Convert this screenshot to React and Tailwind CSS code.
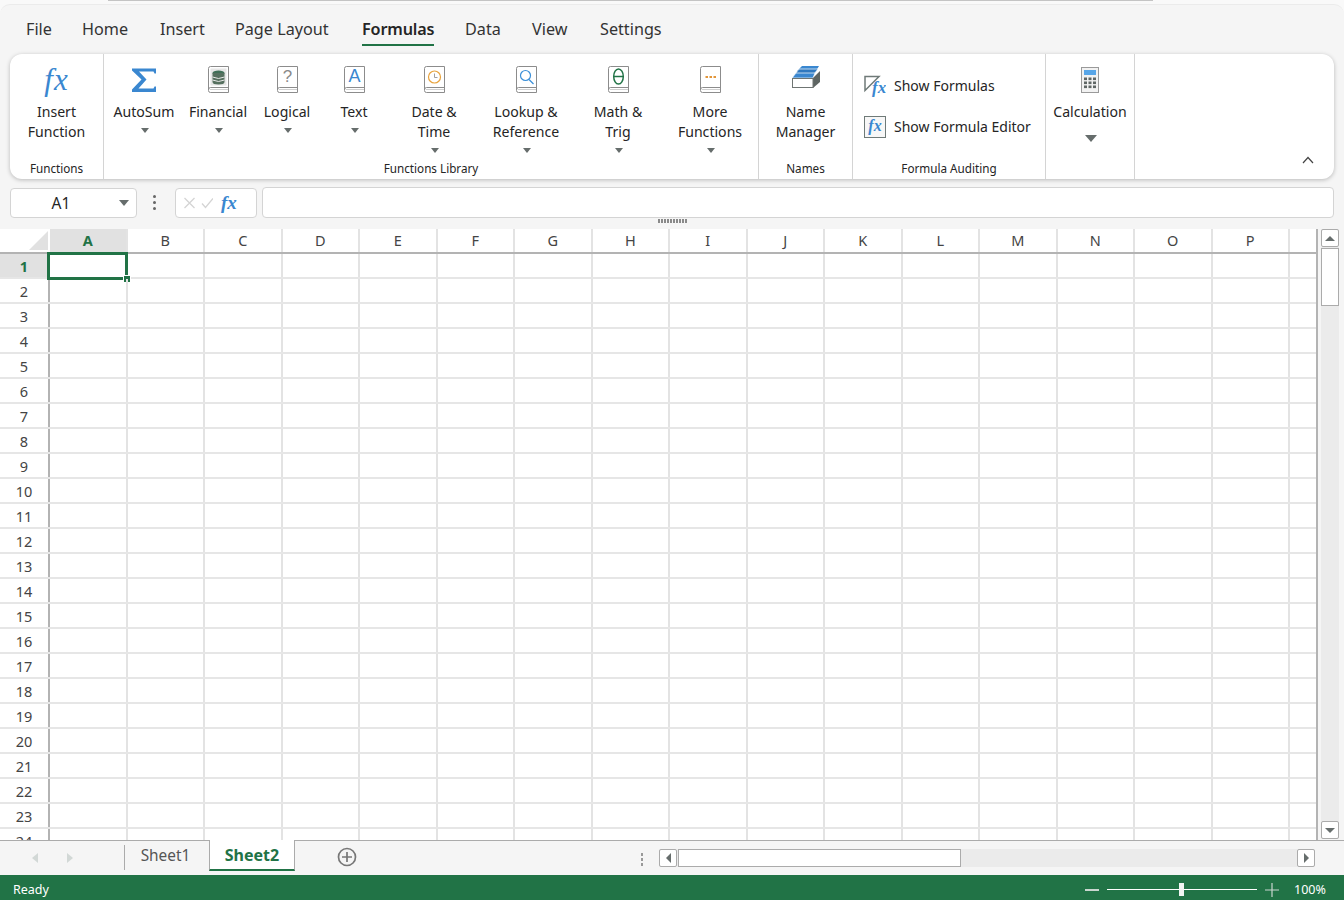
const font = { fontFamily: '"Noto Sans", sans-serif' };

const menu = [
  ["File", "w-[56px]"],
  ["Home", "w-[78px]"],
  ["Insert", "w-[75px]"],
  ["Page Layout", "w-[127px]"],
  ["Formulas", "w-[103px]"],
  ["Data", "w-[67px]"],
  ["View", "w-[68px]"],
  ["Settings", "w-[70px]"],
];
const columns = "ABCDEFGHIJKLMNOP".split("");
const rows = Array.from({ length: 24 }, (_, i) => i + 1);

function Caret({ className = "" }) {
  return <span className={`block w-0 h-0 border-l-[4px] border-r-[4px] border-t-[5px] border-l-transparent border-r-transparent border-t-[#666d6c] ${className}`} />;
}

function Book({ children }) {
  return (
    <svg width="24" height="30" viewBox="0 0 24 30" className="block">
      <path d="M4.5 1.5H22.5V27.5H4.5Q2.5 27.5 2.5 25.5V3.5Q2.5 1.5 4.5 1.5Z" fill="#fff" stroke="#8c8c8c" />
      <path d="M4.5 22.5H22.5M4.5 22.5Q2.5 22.5 2.5 25" fill="none" stroke="#8c8c8c" />
      <path d="M4 24.5H22" stroke="#d0d0d0" />
      {children}
    </svg>
  );
}

const icons = {
  fx: <span className="block -mt-[3px] font-['Liberation_Serif'] italic font-medium text-[31px] leading-[36px] text-[#3a87d0] tracking-[1px]">fx</span>,
  sigma: (
    <svg width="26" height="26" viewBox="0 0 26 26" className="block mt-[2px]">
      <path d="M1 1.5H25V6.5H23.5L22.5 4.5H8L15.5 12.5L7.5 21.5H22.5L23.5 19.5H25V25H1V22.5L10.5 12.5L1 3.5Z" fill="#3a87d0" />
    </svg>
  ),
  financial: (
    <Book>
      <rect x="4.5" y="3.5" width="16" height="17" fill="#e6e6e6" />
      <ellipse cx="12.5" cy="8" rx="6" ry="2.6" fill="#3f6f57" />
      <path d="M6.5 8V17Q6.5 19.5 12.5 19.5T18.5 17V8" fill="#56705f" />
      <path d="M6.5 12Q12.5 15 18.5 12M6.5 15Q12.5 18 18.5 15" fill="none" stroke="#e6e6e6" />
    </Book>
  ),
  logical: (
    <Book>
      <text x="12.5" y="17" textAnchor="middle" fontSize="17" fontFamily="Liberation Sans" fill="#8a8a8a">?</text>
    </Book>
  ),
  text: (
    <Book>
      <text x="12.5" y="17" textAnchor="middle" fontSize="18" fontFamily="Liberation Sans" fill="#3a87d0">A</text>
    </Book>
  ),
  date: (
    <Book>
      <circle cx="12.5" cy="12" r="6" fill="none" stroke="#e8a33d" strokeWidth="1.2" />
      <path d="M12.5 8.5V12.5H15.5" fill="none" stroke="#a0a0a0" />
    </Book>
  ),
  lookup: (
    <Book>
      <circle cx="11.5" cy="10.5" r="5" fill="none" stroke="#3a8fd8" strokeWidth="1.2" />
      <path d="M15 14.5L19.5 19" stroke="#3a8fd8" strokeWidth="1.3" />
    </Book>
  ),
  math: (
    <Book>
      <ellipse cx="12.5" cy="11.5" rx="4.8" ry="7.5" fill="none" stroke="#217346" strokeWidth="1.5" />
      <path d="M8 11.5H17" stroke="#217346" strokeWidth="1.5" />
    </Book>
  ),
  more: (
    <Book>
      <path d="M7.5 11H10V13H7.5ZM11.5 11H14V13H11.5ZM15.5 11H18V13H15.5Z" fill="#e2963a" />
    </Book>
  ),
  name: (
    <svg width="30" height="24" viewBox="0 0 30 24" className="block">
      <path d="M6 6L11 1H28L25 6Z" fill="#3a87d0" />
      <path d="M4 9L8 4H27L23 9Z" fill="#2f78bf" stroke="#fff" strokeWidth="0.7" />
      <path d="M1 13L5 8H24L22 13Z" fill="#3a87d0" stroke="#fff" strokeWidth="0.7" />
      <path d="M22 13L29 6V17L22 23Z" fill="#5e6563" />
      <rect x="1.5" y="13.5" width="20.5" height="9" fill="#fff" stroke="#6f7573" />
    </svg>
  ),
  calc: (
    <svg width="20" height="28" viewBox="0 0 20 28" className="block">
      <rect x="1.5" y="1.5" width="17" height="25" fill="#f2f2f2" stroke="#9a9a9a" />
      <rect x="4" y="4" width="12" height="5" fill="#58a6e8" />
      {[11.5, 15.5, 19.5].map((y) => [4, 8.5, 13].map((x) => <rect key={`${x}-${y}`} x={x} y={y} width="3" height="2.6" fill="#5f6665" />))}
    </svg>
  ),
};

function RibbonButton({ icon, lines, width, caret = true }) {
  return (
    <div className={`flex flex-col items-center shrink-0 ${width}`}>
      <div className="h-[48px] pt-[11px] flex justify-center">{icons[icon]}</div>
      <div className="text-[14.1px] leading-[20px] text-[#252525] text-center whitespace-nowrap">
        {lines.map((l) => <div key={l}>{l}</div>)}
      </div>
      {caret && <Caret className="mt-[6px] ml-[2px]" />}
    </div>
  );
}

function Group({ label, width, children }) {
  return (
    <div className={`flex flex-col shrink-0 border-r border-[#d4d4d4] ${width}`}>
      <div className="flex-1 flex justify-start">{children}</div>
      <div className="h-[18px] text-[11.7px] leading-[14px] text-[#252525] text-center">{label}</div>
    </div>
  );
}

function SheetGrid() {
  return (
    <div className="w-[1318px] h-[611px] shrink-0 overflow-hidden bg-white border-r-2 border-[#b3b3b3]">
      <div className="flex h-[25px] border-b-2 border-[#b3b3b3]">
        <div className="w-[50px] shrink-0 flex items-end justify-end pr-[2px] pb-[2px]">
          <div className="w-0 h-0 border-l-[19px] border-b-[19px] border-l-transparent border-b-[#e1e1e1]" />
        </div>
        {columns.map((c, i) => (
          <div key={c} className={`w-[77.5px] shrink-0 border-r-2 border-[#e3e3e3] text-center text-[14.5px] leading-[23px] ${i === 0 ? "bg-[#e1e1e1] font-bold text-[#217346]" : "text-[#444]"}`}>{c}</div>
        ))}
      </div>
      {rows.map((r) => (
        <div key={r} className="flex h-[25px] border-b-2 border-[#e6e6e6]">
          <div className={`w-[50px] shrink-0 border-r-2 border-[#b3b3b3] text-center text-[14.5px] leading-[24px] ${r === 1 ? "bg-[#e1e1e1] font-bold text-[#217346]" : "text-[#444]"}`}>{r}</div>
          {columns.map((c, i) => (
            <div key={c} className="relative w-[77.5px] shrink-0 border-r-2 border-[#e3e3e3]">
              {r === 1 && i === 0 && (
                <div className="absolute left-[-3px] top-[-2px] w-[81px] h-[28px] border-[3px] border-[#217346]">
                  <div className="absolute right-[-6px] bottom-[-6px] w-[6px] h-[6px] bg-[#217346] border border-white box-content" />
                </div>
              )}
            </div>
          ))}
          <div className="flex-1" />
        </div>
      ))}
    </div>
  );
}

function ScrollButton({ dir, className = "" }) {
  const tri = {
    up: "border-l-[5px] border-r-[5px] border-b-[5px] border-l-transparent border-r-transparent border-b-[#666d6c]",
    down: "border-l-[5px] border-r-[5px] border-t-[5px] border-l-transparent border-r-transparent border-t-[#666d6c]",
    left: "border-t-[5px] border-b-[5px] border-r-[5px] border-t-transparent border-b-transparent border-r-[#666d6c]",
    right: "border-t-[5px] border-b-[5px] border-l-[5px] border-t-transparent border-b-transparent border-l-[#666d6c]",
  };
  return (
    <div className={`w-[18px] h-[18px] shrink-0 bg-white border border-[#ababab] rounded-[2px] flex items-center justify-center ${className}`}>
      <span className={`block w-0 h-0 ${tri[dir]}`} />
    </div>
  );
}

export default function App() {
  return (
    <div style={font} className="w-[1344px] h-[900px] overflow-hidden flex flex-col bg-[#f9f9f9] text-[#252525]">
      {/* window edge */}
      <div className="h-[4px] shrink-0 pl-[108px]">
        <div className="w-[1045px] h-[1px] bg-[#c4c4c4]" />
      </div>

      <div className="flex-1 flex flex-col bg-[#f5f5f5] rounded-t-[10px] border-t border-[#ebebeb]">
        {/* menu */}
        <div className="h-[49px] shrink-0 flex pl-[26px] pt-[13px] text-[16.2px] leading-[22px]">
          {menu.map(([m, w]) => (
            <div key={m} className={`shrink-0 ${w}`}>
              {m === "Formulas"
                ? <span className="block w-fit h-[28px] font-semibold tracking-[-0.15px] border-b-2 border-[#217346]">{m}</span>
                : <span className="text-[#333]">{m}</span>}
            </div>
          ))}
        </div>

        {/* ribbon */}
        <div className="mx-[10px] h-[125px] shrink-0 flex bg-white rounded-xl shadow-[0_1px_4px_rgba(0,0,0,0.25)]">
          <Group label="Functions" width="w-[94px]">
            <RibbonButton icon="fx" lines={["Insert", "Function"]} width="w-[93px]" caret={false} />
          </Group>
          <Group label="Functions Library" width="w-[655px]">
            <div className="w-[4px] shrink-0" />
            <RibbonButton icon="sigma" lines={["AutoSum"]} width="w-[72px]" />
            <RibbonButton icon="financial" lines={["Financial"]} width="w-[76px]" />
            <RibbonButton icon="logical" lines={["Logical"]} width="w-[62px]" />
            <RibbonButton icon="text" lines={["Text"]} width="w-[72px]" />
            <RibbonButton icon="date" lines={["Date &", "Time"]} width="w-[88px]" />
            <RibbonButton icon="lookup" lines={["Lookup &", "Reference"]} width="w-[96px]" />
            <RibbonButton icon="math" lines={["Math &", "Trig"]} width="w-[88px]" />
            <RibbonButton icon="more" lines={["More", "Functions"]} width="w-[96px]" />
          </Group>
          <Group label="Names" width="w-[94px]">
            <RibbonButton icon="name" lines={["Name", "Manager"]} width="w-[93px]" caret={false} />
          </Group>
          <Group label="Formula Auditing" width="w-[193px]">
            <div className="w-full pl-[11px] pt-[21px] flex flex-col gap-[19px] text-[14px] leading-[22px] whitespace-nowrap">
              <div className="flex items-center gap-[8px]">
                <svg width="22" height="22" viewBox="0 0 22 22" className="block shrink-0">
                  <path d="M1 1.5H15L1 15.5Z" fill="none" stroke="#6f7a78" strokeWidth="1.5" />
                  <text x="8" y="18" fontSize="17" fontStyle="italic" fontWeight="700" fontFamily="Liberation Serif" fill="#3a87d0">fx</text>
                </svg>
                <span>Show Formulas</span>
              </div>
              <div className="flex items-center gap-[8px]">
                <span className="block w-[22px] h-[22px] shrink-0 border-[1.5px] border-[#6f7a78] bg-[#f7f7f7] text-center font-['Liberation_Serif'] italic font-bold text-[16px] leading-[18px] text-[#3a87d0]">fx</span>
                <span>Show Formula Editor</span>
              </div>
            </div>
          </Group>
          <div className="w-[89px] shrink-0 border-r border-[#d4d4d4] flex flex-col items-center">
            <div className="h-[48px] pt-[12px]">{icons.calc}</div>
            <div className="text-[14.1px] leading-[20px] whitespace-nowrap">Calculation</div>
            <span className="mt-[13px] ml-[1px] block w-0 h-0 border-l-[6px] border-r-[6px] border-t-[7px] border-l-transparent border-r-transparent border-t-[#666d6c]" />
          </div>
          <div className="flex-1 flex items-end justify-end pr-[20px] pb-[15px]">
            <svg width="12" height="8" viewBox="0 0 12 8" className="block"><path d="M1 7L6 1.5L11 7" fill="none" stroke="#444" strokeWidth="1.2" /></svg>
          </div>
        </div>

        {/* formula bar */}
        <div className="mt-[8px] mx-[10px] h-[31px] shrink-0 flex items-center">
          <div className="w-[127px] h-[30px] bg-white border border-[#d4d4d4] rounded-[4px] flex items-center">
            <span className="w-[100px] pt-[2px] text-center text-[15.5px]">A1</span>
            <Caret className="ml-[8px] border-l-[5px] border-r-[5px] border-t-[6px]" />
          </div>
          <div className="w-[36px] pr-[1px] flex flex-col items-center gap-[3px]">
            {[0, 1, 2].map((d) => <span key={d} className="block w-[3px] h-[3px] rounded-full bg-[#666]" />)}
          </div>
          <div className="ml-[2px] w-[82px] h-[30px] bg-white border border-[#d4d4d4] rounded-[4px] flex items-center pl-[7px] gap-[3px]">
            <svg width="30" height="12" viewBox="0 0 30 12" className="block shrink-0">
              <path d="M1.5 1L11.5 11M11.5 1L1.5 11M19 6.5L22.5 10.5L30 1.5" fill="none" stroke="#d4d4d4" strokeWidth="1.3" />
            </svg>
            <span className="ml-[5px] font-['Liberation_Serif'] italic font-bold text-[19px] leading-[18px] text-[#3a87d0]">fx</span>
          </div>
          <div className="ml-[5px] flex-1 h-[31px] bg-white border border-[#d4d4d4] rounded-[4px]" />
        </div>

        {/* splitter */}
        <div className="h-[11px] shrink-0 flex justify-center gap-[1px] pl-[1px]">
          {Array.from({ length: 10 }, (_, i) => <span key={i} className="block w-[2px] h-[4px] mt-[1px] bg-[#8a8a8a]" />)}
        </div>

        {/* sheet */}
        <div className="h-[611px] shrink-0 flex bg-[#f5f5f5]">
          <SheetGrid />
          <div className="ml-[3px] w-[18px] flex flex-col h-[610px] bg-[#ebebeb]">
            <ScrollButton dir="up" />
            <div className="mt-[1px] h-[58px] bg-white border border-[#ababab]" />
            <div className="flex-1" />
            <ScrollButton dir="down" />
          </div>
        </div>

        {/* sheet tabs */}
        <div className="h-[35px] shrink-0 flex items-start border-t border-[#ababab] relative">
          <div className="w-[124px] h-[34px] flex items-center pl-[32px] gap-[29px] shrink-0">
            <span className="block w-0 h-0 border-t-[5px] border-b-[5px] border-r-[6px] border-t-transparent border-b-transparent border-r-[#d2d8d6]" />
            <span className="block w-0 h-0 border-t-[5px] border-b-[5px] border-l-[6px] border-t-transparent border-b-transparent border-l-[#d2d8d6]" />
          </div>
          <div className="w-[85px] h-[25px] mt-[4px] pr-[3px] border-l border-[#ababab] text-[15.4px] leading-[22px] text-center text-[#555]">Sheet1</div>
          <div className="w-[86px] h-[31px] -mt-px bg-white border-x border-[#ababab] border-b-2 border-b-[#217346] text-[16px] leading-[30px] text-center font-bold text-[#217346]">Sheet2</div>
          <svg width="20" height="20" viewBox="0 0 20 20" className="block ml-[42px] mt-[6px] shrink-0">
            <circle cx="10" cy="10" r="8.5" fill="none" stroke="#777" strokeWidth="1.7" />
            <path d="M10 5V15M5 10H15" stroke="#777" strokeWidth="1.7" />
          </svg>
          <div className="ml-[284px] mt-[12px] flex flex-col gap-[2px]">
            {[0, 1, 2].map((d) => <span key={d} className="block w-[2px] h-[3px] bg-[#999]" />)}
          </div>
          <div className="ml-[16px] mt-[8px] w-[656px] flex bg-[#ebebeb]">
            <ScrollButton dir="left" />
            <div className="ml-[1px] w-[283px] h-[18px] bg-white border border-[#ababab]" />
            <div className="flex-1" />
            <ScrollButton dir="right" />
          </div>
        </div>

        {/* status bar */}
        <div className="h-[25px] shrink-0 bg-[#217346] flex items-center text-white text-[12.5px] pl-[13px] pt-[4px]">
          <span className="mt-[2px]">Ready</span>
          <div className="flex-1" />
          <span className="block w-[14px] h-[2px] bg-[#c9d6cf]" />
          <div className="ml-[8px] w-[150px] h-[1px] bg-white flex items-center pl-[72px]">
            <span className="block w-[5px] h-[13px] bg-[#f0f5f2] shrink-0" />
          </div>
          <svg width="14" height="14" viewBox="0 0 14 14" className="block ml-[8px]"><path d="M7 0V14M0 7H14" stroke="#c9d6cf" strokeWidth="1.2" /></svg>
          <span className="ml-[15px] mr-[18px] mt-[2px] w-[32px]">100%</span>
        </div>
      </div>
    </div>
  );
}
